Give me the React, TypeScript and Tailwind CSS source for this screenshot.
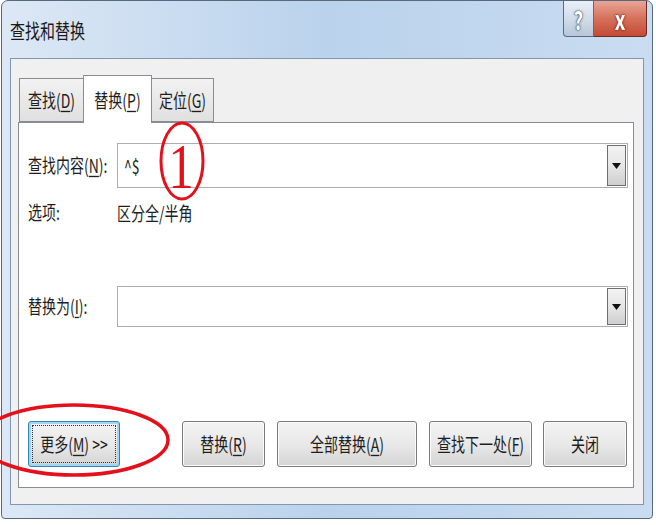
import React from "react";

const font = "font-['Microsoft_YaHei','Noto_Sans_CJK_SC',sans-serif]";

// stretched text, the screenshot is taller than it is wide
const T = ({ children, className = "" }: { children: React.ReactNode; className?: string }) => (
  <span className={`inline-block origin-center scale-y-[1.35] leading-none ${className}`}>{children}</span>
);

const Key = ({ k }: { k: string }) => (
  <>
    (<span className="underline underline-offset-2">{k}</span>)
  </>
);

const ComboBox = ({ value, h }: { value?: string; h: string }) => (
  <div className={`w-[511px] ${h} flex border border-[#abadb3] bg-white`}>
    <div className="flex-1 pl-[6px] pt-[12px] text-[14px] text-[#222]">
      {value && <T>{value}</T>}
    </div>
    <div className="w-[19px] m-[1px] flex items-center justify-center border border-[#6f6f6f] bg-gradient-to-b from-[#f3f3f3] via-[#e6e6e6] to-[#cfcfcf]">
      <svg width="9" height="6" viewBox="0 0 9 6">
        <path d="M0 0h9L4.5 6z" fill="#111" />
      </svg>
    </div>
  </div>
);

const Button = ({
  children,
  w,
  focused,
}: {
  children: React.ReactNode;
  w: string;
  focused?: boolean;
}) => (
  <div
    className={`${w} h-[46px] rounded-[3px] border flex items-center justify-center text-[14px] text-[#1e1e1e] bg-gradient-to-b from-[#f4f4f4] via-[#e9e9e9] to-[#d4d4d4] ${
      focused
        ? "border-[#3c7fb1] shadow-[inset_0_0_0_2px_#9fd6f3] p-[3px]"
        : "border-[#7a7a7a] shadow-[inset_0_0_0_1px_#fbfbfb]"
    }`}>
    {focused ? (
      <div className="w-full h-full border border-dotted border-[#333] flex items-center justify-center">
        <T>{children}</T>
      </div>
    ) : (
      <T>{children}</T>
    )}
  </div>
);

const Tab = ({ children, active, w }: { children: React.ReactNode; active?: boolean; w: string }) => (
  <div
    className={`${w} border border-[#898c95] flex items-center justify-center text-[14px] text-[#1e1e1e] ${
      active
        ? "h-[48px] -mb-[1px] border-b-0 bg-white relative z-10 -mx-[1px]"
        : "h-[44px] bg-gradient-to-b from-[#f2f2f2] to-[#e0e0e0]"
    }`}>
    <T>{children}</T>
  </div>
);

export default function App() {
  return (
    <div className={`w-[656px] h-[525px] bg-white relative overflow-hidden ${font}`}>
      <div className="ml-[1px] w-[652px] h-[519px] rounded-t-[7px] rounded-b-[4px] border border-[#56697f] bg-gradient-to-r from-[#dce8f5] via-[#bad2ec] to-[#c9dcf1] flex flex-col">
        {/* title bar */}
        <div className="h-[57px] flex justify-between pl-[8px] pr-[5px]">
          <div className="pt-[19px] text-[15px] text-[#1a1a1a]">
            <T>查找和替换</T>
          </div>
          <div className="flex items-start">
            <div className="w-[31px] h-[36px] rounded-bl-[4px] border border-t-0 border-[#5b6c80] bg-gradient-to-b from-[#e9eff7] via-[#d2dde9] to-[#b7c6d8] flex items-center justify-center text-white text-[18px] font-bold [text-shadow:0_0_2px_#2a3a50,0_0_1px_#2a3a50]">
              <T>?</T>
            </div>
            <div className="w-[53px] h-[36px] rounded-br-[4px] border border-t-0 border-l-0 border-[#6b2b22] bg-gradient-to-b from-[#e9a595] via-[#d5705c] to-[#c44a34] flex items-center justify-center text-white text-[19px] font-bold [text-shadow:0_0_2px_#5a1a10,0_0_1px_#5a1a10]">
              <T>x</T>
            </div>
          </div>
        </div>

        {/* client */}
        <div className="mx-[8px] h-[447px] bg-[#f0f0f0] border border-[#8196b0] pt-[16px] pl-[7px] pr-[9px]">
          <div className="flex items-end pl-[1px]">
            <Tab w="w-[65px]">
              查找<Key k="D" />
            </Tab>
            <Tab w="w-[69px]" active>
              替换<Key k="P" />
            </Tab>
            <Tab w="w-[63px]">
              定位<Key k="G" />
            </Tab>
          </div>
          <div className="h-[366px] border border-[#898c95] bg-white pl-[9px] pt-[20px]">
            <div className="flex items-center">
              <div className="w-[89px] text-[14px] text-[#1e1e1e]">
                <T>
                  查找内容<Key k="N" />:
                </T>
              </div>
              <ComboBox value="^$" h="h-[45px]" />
            </div>
            <div className="flex items-center mt-[14px] text-[14px] text-[#1e1e1e]">
              <div className="w-[89px]">
                <T>选项:</T>
              </div>
              <T>区分全/半角</T>
            </div>
            <div className="flex items-center mt-[63px]">
              <div className="w-[89px] text-[14px] text-[#1e1e1e]">
                <T>
                  替换为<Key k="I" />:
                </T>
              </div>
              <ComboBox h="h-[41px]" />
            </div>
            <div className="flex mt-[94px]">
              <Button w="w-[92px]" focused>
                更多<Key k="M" /> &gt;&gt;
              </Button>
              <div className="ml-[62px]">
                <Button w="w-[83px]">
                  替换<Key k="R" />
                </Button>
              </div>
              <div className="ml-[12px]">
                <Button w="w-[140px]">
                  全部替换<Key k="A" />
                </Button>
              </div>
              <div className="ml-[12px]">
                <Button w="w-[103px]">
                  查找下一处<Key k="F" />
                </Button>
              </div>
              <div className="ml-[11px]">
                <Button w="w-[84px]">关闭</Button>
              </div>
            </div>
          </div>
        </div>
      </div>

      {/* red annotations */}
      <svg className="absolute left-0 top-0 pointer-events-none" width="656" height="525">
        <ellipse cx="182" cy="161" rx="21" ry="38" fill="none" stroke="#e3111b" strokeWidth="3" />
        <text
          x="181"
          y="188"
          textAnchor="middle"
          fontFamily="'Liberation Serif', serif"
          fontSize="64"
          fill="#e3111b"
          transform="translate(181 0) scale(0.8 1) translate(-181 0)">
          1
        </text>
        <ellipse cx="74" cy="440" rx="94" ry="35" fill="none" stroke="#e3111b" strokeWidth="3.5" />
      </svg>
    </div>
  );
}
